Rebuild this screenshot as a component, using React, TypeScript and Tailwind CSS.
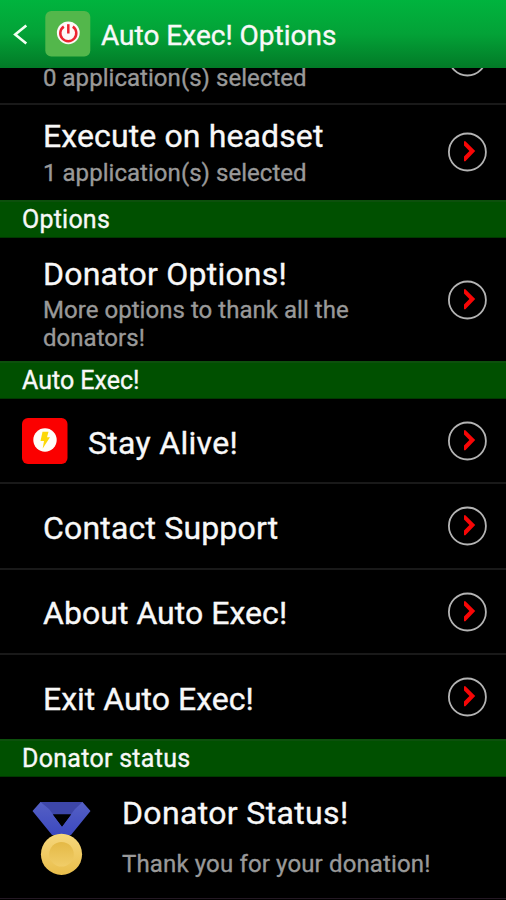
import type { ReactNode } from "react";

function ArrowBadge({ className = "" }: { className?: string }) {
  return (
    <svg className={`h-10 w-10 shrink-0 ${className}`} viewBox="0 0 40 40" fill="none">
      <circle cx="20.4" cy="20" r="18.5" stroke="#b4b4b4" strokeWidth="1.8" />
      <path d="M17 9.2 L18.4 9.2 L28.2 19 L18.4 29.2 L17 29.2 L17 24.6 L22.4 19 L17 13.6 Z" fill="#f80606" />
    </svg>
  );
}

function SectionBar({ children, spacing }: { children: ReactNode; spacing: string }) {
  return (
    <div className="flex h-[38px] shrink-0 items-center border-t-2 border-b border-t-[#0c500c] border-b-[#013801] bg-[#005000] pl-[22px]">
      <h2 className={`text-[25px] leading-[35px] whitespace-nowrap ${spacing}`}>{children}</h2>
    </div>
  );
}

function SimpleRow({ children, spacing, height }: { children: ReactNode; spacing: string; height: string }) {
  return (
    <div className={`flex shrink-0 items-center justify-between border-b-2 border-[#191919] pr-[19px] pl-[43px] ${height}`}>
      <span className={`pt-[3px] text-[32px] leading-9 whitespace-nowrap ${spacing}`}>{children}</span>
      <ArrowBadge />
    </div>
  );
}

function Medal() {
  return (
    <svg className="h-[76px] w-[60px] shrink-0" viewBox="0 0 60 76">
      <defs>
        <linearGradient id="ribbon" x1="0" y1="0" x2="0" y2="1">
          <stop offset="0" stopColor="#5560c4" />
          <stop offset="1" stopColor="#3c49c0" />
        </linearGradient>
        <linearGradient id="gold" x1="0" y1="0" x2="0" y2="1">
          <stop offset="0" stopColor="#f6d77c" />
          <stop offset="1" stopColor="#e9be4b" />
        </linearGradient>
        <linearGradient id="core" x1="0" y1="0" x2="0" y2="1">
          <stop offset="0" stopColor="#e4b946" />
          <stop offset="1" stopColor="#f1cd68" />
        </linearGradient>
      </defs>
      <path d="M9 2 H52 L44 14.5 H16 Z" fill="#3d46a8" />
      <path d="M9.5 2 L1.5 11 L21 35 H40 L31 26.5 L18 9 Z" fill="url(#ribbon)" />
      <path d="M51.5 2 L59.5 11 L40 35 H22 L31 26.5 L44 9 Z" fill="url(#ribbon)" />
      <path d="M22 14.5 H40 L31 26.5 Z" fill="#000" />
      <circle cx="30.5" cy="54.3" r="20.6" fill="url(#gold)" />
      <circle cx="30.5" cy="54.3" r="12.3" fill="url(#core)" />
    </svg>
  );
}

export default function App() {
  return (
    <main className="flex h-[900px] w-[506px] flex-col overflow-hidden bg-black font-['Roboto',sans-serif] text-[#f8f8f8] [-webkit-text-stroke:0.35px_currentColor]">
      <header className="flex h-[68px] shrink-0 items-center bg-linear-to-b from-[#00b43e] via-[#03a237] to-[#027a27] pl-[13px]">
        <svg className="h-6 w-4 shrink-0" viewBox="0 0 16 24" fill="none" stroke="#f2fff2" strokeWidth="2.6">
          <path d="M13.3 3.5 L2.2 12.5 L13.3 21.5" />
        </svg>
        <svg className="ml-[16px] h-[46px] w-[46px] shrink-0" viewBox="0 0 46 46">
          <rect x="0.3" y="0" width="45" height="45.5" rx="6" fill="#53b74b" />
          <circle cx="23.3" cy="21.8" r="11.4" fill="#fdf8f7" />
          <path d="M18.8 15.6 A8 8 0 1 0 27.8 15.6" fill="none" stroke="#ec2430" strokeWidth="2.5" />
          <path d="M23.3 13.2 V22.5" stroke="#ec2430" strokeWidth="2.5" />
        </svg>
        <h1 className="ml-[10px] pt-1 text-[28px] leading-9 whitespace-nowrap">Auto Exec! Options</h1>
      </header>

      <div className="flex h-[37px] shrink-0 justify-between overflow-hidden border-b-2 border-[#191919] pr-[19px] pl-[43px]">
        <p className="-mt-[4px] text-[24px] leading-7 tracking-[0.04px] whitespace-nowrap text-[#999]">0 application(s) selected</p>
        <ArrowBadge className="-mt-[31.5px]" />
      </div>

      <div className="flex h-[95px] shrink-0 items-center justify-between pr-[19px] pl-[43px]">
        <div>
          <h3 className="text-[32px] leading-9 tracking-[0.12px] whitespace-nowrap">Execute on headset</h3>
          <p className="mt-[5px] text-[24px] leading-7 tracking-[0.04px] whitespace-nowrap text-[#999]">1 application(s) selected</p>
        </div>
        <ArrowBadge className="-mt-px" />
      </div>

      <SectionBar spacing="tracking-[0.22px]">Options</SectionBar>
      <div className="flex h-[123px] shrink-0 items-center justify-between pr-[19px] pl-[43px]">
        <div className="pt-[9px]">
          <h3 className="text-[32px] leading-9 tracking-[0.22px] whitespace-nowrap">Donator Options!</h3>
          <p className="mt-[5px] text-[24px] leading-[27.5px] tracking-[0.04px] whitespace-nowrap text-[#999]">
            More options to thank all the
            <br />
            donators!
          </p>
        </div>
        <ArrowBadge />
      </div>

      <SectionBar spacing="">Auto Exec!</SectionBar>
      <div className="flex h-[85px] shrink-0 items-center border-b-2 border-[#191919] pr-[19px] pl-[22px]">
        <svg className="h-[46px] w-[46px] shrink-0" viewBox="0 0 46 46">
          <rect x="0" y="0" width="45.5" height="46" rx="6" fill="#fb0000" />
          <circle cx="23" cy="22" r="11.7" fill="#fffdf8" />
          <path d="M20.5 13.8 H26.5 L25 19.2 H28 L20.7 30.5 L22 23 H18.5 Z" fill="#fcd808" />
        </svg>
        <span className="ml-5 flex-1 pt-[4px] text-[32px] leading-9 tracking-[0.3px] whitespace-nowrap">Stay Alive!</span>
        <ArrowBadge />
      </div>
      <SimpleRow height="h-[86px]" spacing="tracking-[0.18px]">Contact Support</SimpleRow>
      <SimpleRow height="h-[85px]" spacing="tracking-[0.04px]">About Auto Exec!</SimpleRow>
      <div className="flex h-[84px] shrink-0 items-center justify-between pr-[19px] pl-[43px]">
        <span className="pt-[4px] text-[32px] leading-9 whitespace-nowrap">Exit Auto Exec!</span>
        <ArrowBadge />
      </div>

      <SectionBar spacing="tracking-[0.28px]">Donator status</SectionBar>
      <div className="flex h-[122px] shrink-0 border-b border-[#241824] pl-[31px]">
        <div className="pt-[23px]">
          <Medal />
        </div>
        <div className="ml-[31px] pt-[18px]">
          <h3 className="text-[32px] leading-9 tracking-[0.35px] whitespace-nowrap">Donator Status!</h3>
          <p className="mt-[19px] text-[24px] leading-7 tracking-[0.14px] whitespace-nowrap text-[#999]">Thank you for your donation!</p>
        </div>
      </div>
    </main>
  );
}
